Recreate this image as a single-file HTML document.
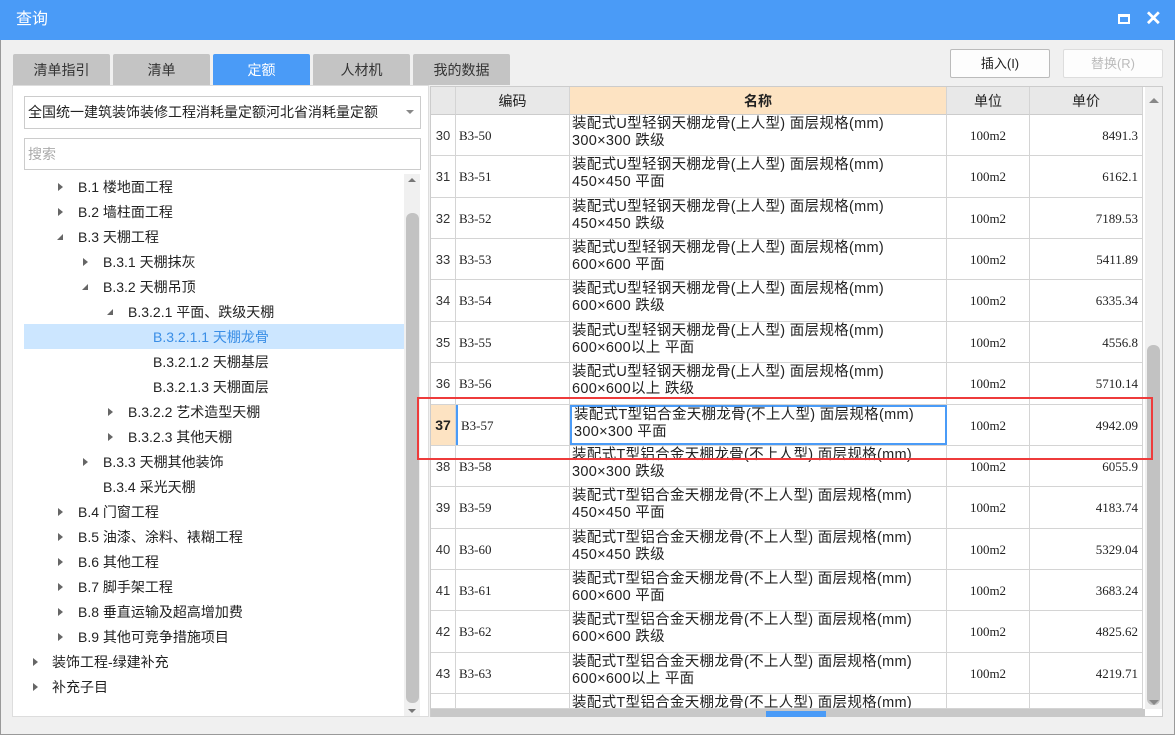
<!DOCTYPE html><html><head><meta charset="utf-8"><style>
*{margin:0;padding:0;box-sizing:border-box}
body{width:1175px;height:735px;overflow:hidden;background:#f0f0f0;font-family:"Liberation Sans","Noto Sans CJK SC",sans-serif;position:relative;font-size:14px;color:#222}
.a{position:absolute}
.title{left:0;top:0;width:1175px;height:40px;background:#4a9bf7;color:#fff;font-size:16px;line-height:40px;padding-left:16px}
.tab{top:54px;height:31px;width:97px;background:#c4c4c4;text-align:center;line-height:33px;font-size:14px;color:#333;border-radius:2px 2px 0 0}
.btn{top:49px;height:29px;background:#fdfdfd;border:1px solid #bbb;border-radius:2px;text-align:center;line-height:28px;font-size:13px}
.ti{position:absolute;height:25px;line-height:25px;font-size:14px;white-space:nowrap;color:#222}
.tri{position:absolute;width:0;height:0}
.tr{border-left:5px solid #666;border-top:4px solid transparent;border-bottom:4px solid transparent}
.td{border-right:6px solid #666;border-top:6px solid transparent}
.row{position:absolute;left:431px;width:712px;height:41.36px;background:#fff;border-bottom:1px solid #d4d4d4;font-family:"Liberation Serif","Noto Serif CJK SC",serif;font-size:13px}
.row div{position:absolute;top:0;height:100%;border-right:1px solid #d4d4d4}
.c0{left:0;width:25px;text-align:center;line-height:41px;font-family:"Liberation Sans",sans-serif;font-size:13px;color:#333}
.c1{left:25px;width:114px;padding-left:3px;line-height:41px}
.c2{left:139px;width:377px;padding:1px 0 0 2px;line-height:17px;font-size:14.5px;letter-spacing:0.3px;font-family:"Liberation Sans","Noto Sans CJK SC",sans-serif;white-space:nowrap}
.c3{left:516px;width:83px;text-align:center;line-height:41px}
.c4{left:599px;width:113px;text-align:right;padding-right:4px;line-height:41px}
.hd{position:absolute;top:87px;height:28px;background:#e8e8e8;border-right:1px solid #d4d4d4;border-bottom:1px solid #ccc;text-align:center;line-height:28px;font-size:14px}
</style></head><body>
<div class="a title">查询</div>
<div class="a" style="left:1118px;top:14px;width:12px;height:10px;border:2px solid #fff;border-top-width:3px"></div>
<div class="a" style="left:1145px;top:6px;color:#fff;font-size:20px;font-weight:bold">✕</div>
<div class="a" style="left:0;top:40px;width:1px;height:695px;background:#999"></div>
<div class="a" style="left:1174px;top:40px;width:1px;height:695px;background:#999"></div>
<div class="a" style="left:0;top:734px;width:1175px;height:1px;background:#999"></div>
<div class="a tab" style="left:13px">清单指引</div>
<div class="a tab" style="left:113px">清单</div>
<div class="a tab" style="left:213px;background:#4a9bf7;color:#fff">定额</div>
<div class="a tab" style="left:313px">人材机</div>
<div class="a tab" style="left:413px">我的数据</div>
<div class="a btn" style="left:950px;width:100px">插入(I)</div>
<div class="a btn" style="left:1063px;width:100px;color:#bbb;border-color:#ddd">替换(R)</div>
<div class="a" style="left:12px;top:85px;width:417px;height:632px;background:#fff;border:1px solid #ddd"></div>
<div class="a" style="left:24px;top:96px;width:397px;height:33px;border:1px solid #ccc;background:#fff;line-height:31px;padding-left:3px;font-size:14px;white-space:nowrap;overflow:hidden">全国统一建筑装饰装修工程消耗量定额河北省消耗量定额</div>
<div class="a" style="left:398px;top:97px;width:22px;height:31px;background:#fff"></div>
<div class="a tri" style="left:406px;top:110px;border-top:4px solid #888;border-left:4px solid transparent;border-right:4px solid transparent"></div>
<div class="a" style="left:24px;top:138px;width:397px;height:32px;border:1px solid #ccc;background:#fff;line-height:30px;padding-left:3px;color:#aaa">搜索</div>
<div class="a" style="left:24px;top:324px;width:380px;height:25px;background:#cce6ff"></div>
<div class="a" style="left:404px;top:174px;width:16px;height:542px;background:#f0f0f0"></div>
<div class="a" style="left:406px;top:213px;width:13px;height:490px;background:#c2c2c2;border-radius:6px"></div>
<div class="a tri" style="left:408px;top:178px;border-bottom:4px solid #777;border-left:4px solid transparent;border-right:4px solid transparent"></div>
<div class="a tri" style="left:408px;top:709px;border-top:4px solid #777;border-left:4px solid transparent;border-right:4px solid transparent"></div>

<div class="tri tr a" style="left:58px;top:183px"></div><div class="ti" style="left:78px;top:175px">B.1 楼地面工程</div>
<div class="tri tr a" style="left:58px;top:208px"></div><div class="ti" style="left:78px;top:200px">B.2 墙柱面工程</div>
<div class="tri td a" style="left:57px;top:234px"></div><div class="ti" style="left:78px;top:225px">B.3 天棚工程</div>
<div class="tri tr a" style="left:83px;top:258px"></div><div class="ti" style="left:103px;top:250px">B.3.1 天棚抹灰</div>
<div class="tri td a" style="left:82px;top:284px"></div><div class="ti" style="left:103px;top:275px">B.3.2 天棚吊顶</div>
<div class="tri td a" style="left:107px;top:309px"></div><div class="ti" style="left:128px;top:300px">B.3.2.1 平面、跌级天棚</div>
<div class="ti" style="left:153px;top:325px;color:#3a8ee6">B.3.2.1.1 天棚龙骨</div>
<div class="ti" style="left:153px;top:350px">B.3.2.1.2 天棚基层</div>
<div class="ti" style="left:153px;top:375px">B.3.2.1.3 天棚面层</div>
<div class="tri tr a" style="left:108px;top:408px"></div><div class="ti" style="left:128px;top:400px">B.3.2.2 艺术造型天棚</div>
<div class="tri tr a" style="left:108px;top:433px"></div><div class="ti" style="left:128px;top:425px">B.3.2.3 其他天棚</div>
<div class="tri tr a" style="left:83px;top:458px"></div><div class="ti" style="left:103px;top:450px">B.3.3 天棚其他装饰</div>
<div class="ti" style="left:103px;top:475px">B.3.4 采光天棚</div>
<div class="tri tr a" style="left:58px;top:508px"></div><div class="ti" style="left:78px;top:500px">B.4 门窗工程</div>
<div class="tri tr a" style="left:58px;top:533px"></div><div class="ti" style="left:78px;top:525px">B.5 油漆、涂料、裱糊工程</div>
<div class="tri tr a" style="left:58px;top:558px"></div><div class="ti" style="left:78px;top:550px">B.6 其他工程</div>
<div class="tri tr a" style="left:58px;top:583px"></div><div class="ti" style="left:78px;top:575px">B.7 脚手架工程</div>
<div class="tri tr a" style="left:58px;top:608px"></div><div class="ti" style="left:78px;top:600px">B.8 垂直运输及超高增加费</div>
<div class="tri tr a" style="left:58px;top:633px"></div><div class="ti" style="left:78px;top:625px">B.9 其他可竞争措施项目</div>
<div class="tri tr a" style="left:33px;top:658px"></div><div class="ti" style="left:52px;top:650px">装饰工程-绿建补充</div>
<div class="tri tr a" style="left:33px;top:683px"></div><div class="ti" style="left:52px;top:675px">补充子目</div>

<div class="a" style="left:430px;top:86px;width:733px;height:631px;background:#fff;border:1px solid #ccc;overflow:hidden">
<div style="position:absolute;left:0;top:0;width:733px;height:631px">
<div class="hd" style="left:0;top:0;width:25px"></div>
<div class="hd" style="left:25px;top:0;width:114px">编码</div>
<div class="hd" style="left:139px;top:0;width:377px;background:#fde3c2;font-weight:bold">名称</div>
<div class="hd" style="left:516px;top:0;width:83px">单位</div>
<div class="hd" style="left:599px;top:0;width:113px">单价</div>
</div></div>
<div id="rows"></div>
<div class="a" style="left:1145px;top:87px;width:17px;height:622px;background:#f0f0f0"></div>
<div class="a tri" style="left:1149px;top:98px;border-bottom:5px solid #888;border-left:5px solid transparent;border-right:5px solid transparent"></div>
<div class="a" style="left:1147px;top:345px;width:13px;height:360px;background:#c2c2c2;border-radius:6px"></div>
<div class="a tri" style="left:1149px;top:700px;border-top:5px solid #888;border-left:5px solid transparent;border-right:5px solid transparent"></div>
<div class="a" style="left:431px;top:709px;width:714px;height:8px;background:#c8c8c8"></div>
<div class="a" style="left:766px;top:711px;width:60px;height:6px;background:#4a9bf7"></div>
<div class="a" style="left:417px;top:397px;width:736px;height:63px;border:2px solid #ee3b3b;z-index:5"></div>
<script>
var d=[["30","B3-50","装配式U型轻钢天棚龙骨(上人型) 面层规格(mm)","300×300 跌级","8491.3"],
["31","B3-51","装配式U型轻钢天棚龙骨(上人型) 面层规格(mm)","450×450 平面","6162.1"],
["32","B3-52","装配式U型轻钢天棚龙骨(上人型) 面层规格(mm)","450×450 跌级","7189.53"],
["33","B3-53","装配式U型轻钢天棚龙骨(上人型) 面层规格(mm)","600×600 平面","5411.89"],
["34","B3-54","装配式U型轻钢天棚龙骨(上人型) 面层规格(mm)","600×600 跌级","6335.34"],
["35","B3-55","装配式U型轻钢天棚龙骨(上人型) 面层规格(mm)","600×600以上 平面","4556.8"],
["36","B3-56","装配式U型轻钢天棚龙骨(上人型) 面层规格(mm)","600×600以上 跌级","5710.14"],
["37","B3-57","装配式T型铝合金天棚龙骨(不上人型) 面层规格(mm)","300×300 平面","4942.09"],
["38","B3-58","装配式T型铝合金天棚龙骨(不上人型) 面层规格(mm)","300×300 跌级","6055.9"],
["39","B3-59","装配式T型铝合金天棚龙骨(不上人型) 面层规格(mm)","450×450 平面","4183.74"],
["40","B3-60","装配式T型铝合金天棚龙骨(不上人型) 面层规格(mm)","450×450 跌级","5329.04"],
["41","B3-61","装配式T型铝合金天棚龙骨(不上人型) 面层规格(mm)","600×600 平面","3683.24"],
["42","B3-62","装配式T型铝合金天棚龙骨(不上人型) 面层规格(mm)","600×600 跌级","4825.62"],
["43","B3-63","装配式T型铝合金天棚龙骨(不上人型) 面层规格(mm)","600×600以上 平面","4219.71"],
["44","B3-64","装配式T型铝合金天棚龙骨(不上人型) 面层规格(mm)","600×600以上 跌级","5300.46"]];
var h='';d.forEach(function(r,i){var t=115+i*41.36;var hh=Math.min(41.36,709-t);
var sel=r[0]=="37";
h+='<div class="row" style="top:'+t+'px;height:'+hh+'px;overflow:hidden"><div class="c0" style="'+(sel?'background:#fde3c2;font-weight:bold;font-size:14px;color:#222':'')+'">'+r[0]+'</div><div class="c1" style="'+(sel?'border-left:2px solid #4a9bf7':'')+'">'+r[1]+'</div><div class="c2" style="'+(sel?'border:2px solid #4a9bf7;padding-top:0':'')+'">'+r[2]+'<br>'+r[3]+'</div><div class="c3">100m2</div><div class="c4">'+r[4]+'</div></div>';});
document.getElementById('rows').innerHTML=h;
</script>
</body></html>
